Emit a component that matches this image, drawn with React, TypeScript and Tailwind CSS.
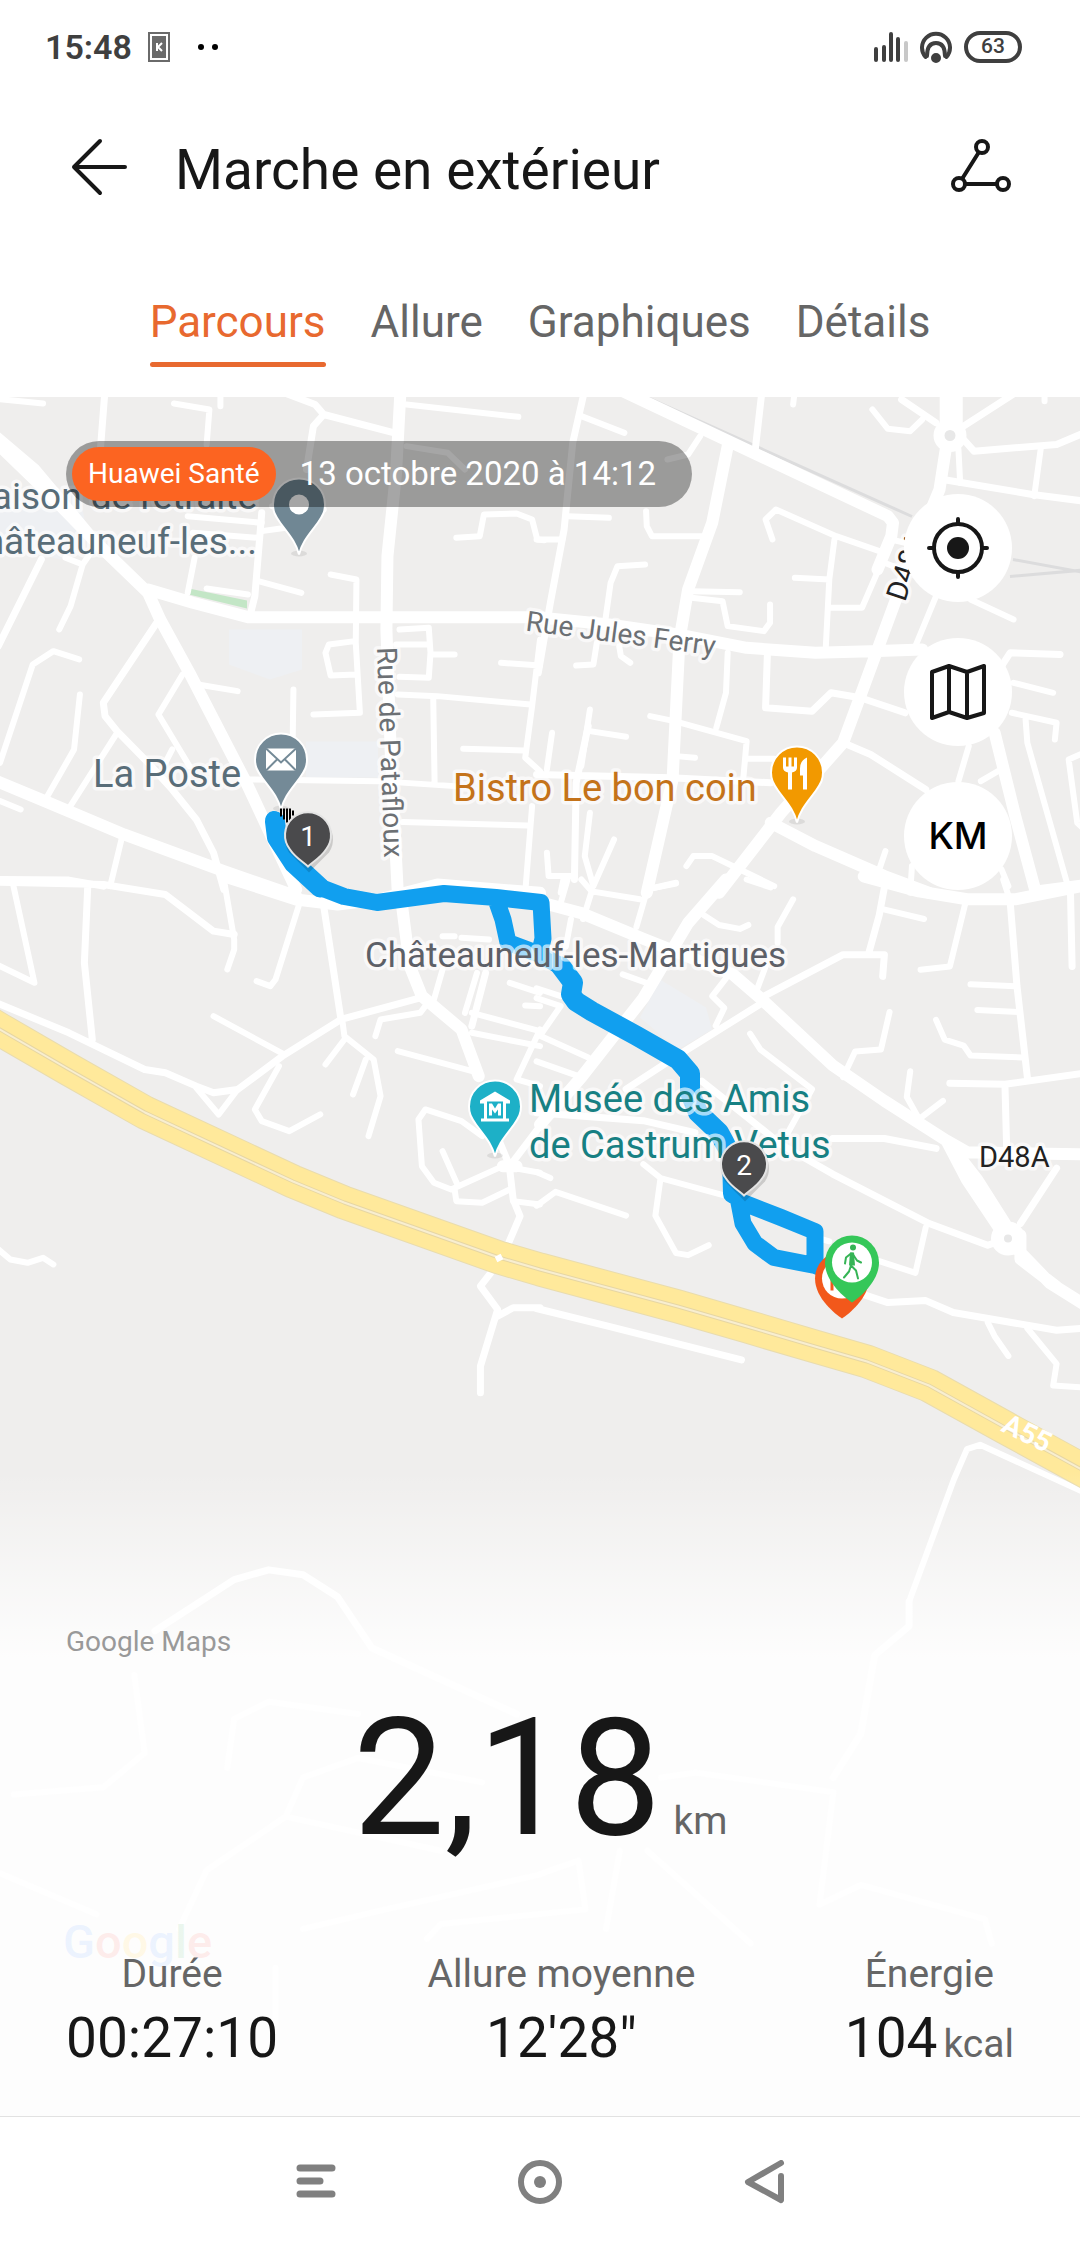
import React, { useState } from "react";

interface Tile {
  transform: string;
  minor: string;
  medium: string;
  major: string;
}

// The road network, one entry per map tile
const tiles: Tile[] = [
  {
    transform: "translate(0 390) scale(.3444 .3333)",
    minor:
      "M505 42L608 60L600 165M640 0V50M-10 28L125 42M1180 45L1505 82M1180 170L1300 190L1350 240M1325 445L1393 440L1405 375L1500 372L1545 390L1560 450L1580 452M190 505L240 525L205 650L172 720M240 525L270 480M565 505L545 610M545 380L760 400M560 430L750 445M760 425L830 415M750 575L875 610M600 597L720 615M790 350L940 360M960 555L1035 570L1033 760L1045 970L910 975M1030 755L955 765L945 790L960 858L1035 855M1150 765H1240M1160 720L1245 715L1250 790L1245 865L1160 862M1255 795H1320M1455 820L1568 828M1155 915L1270 920L1540 945M1258 930L1262 1185M1568 750L1545 950L1525 1105L1568 1145M1345 1078L1520 1083M720 1170L1100 1175L1320 1190M1170 1298L1530 1308M1545 1250L1525 1510M852 900L850 1040M575 885L690 905M530 855L460 975L550 1130M500 1080L480 1120M340 1030L195 1265M232 915L215 1080L135 1225M230 810L155 785L95 825L0 1120M0 1235L60 1260M355 1340L320 1490",
    medium:
      "M305 0L290 200M800 0L915 45L940 75L1145 130M940 75L910 110L890 240M120 510L-5 770M760 370L740 620L728 670M455 700L300 940L305 980L340 1025L430 1120L500 1200L570 1290L620 1390L650 1500M-10 1470L200 1472L300 1490",
    major:
      "M-20 150L130 300L290 470L430 610L465 690L550 850L720 1190L860 1500M-20 135L100 240L270 450M430 600L560 640L720 683H1575M1163 0L1150 250L1125 500L1122 720L1135 1100L1155 1510M-10 1175L130 1235L360 1335L650 1445L860 1520",
  },
  {
    transform: "translate(540 390) scale(.3444 .3333)",
    minor:
      "M120 80L245 130M740 0L735 45M965 60L1010 118L1075 125L1110 90M1465 0V35M1455 170L1435 320M1215 180L1220 280M465 140L430 195L370 210M80 380L200 385M-10 450L65 450M308 365L310 410L325 440L490 440M675 450L655 390L685 360L860 440L1000 490M1020 450L1060 460M855 450L840 570L830 770M740 565L840 570M840 655L935 655L1000 500M1000 520L1050 540M305 525L225 530L205 580L190 690M440 605L580 608M440 625L530 635L545 710L650 725L668 700V645M1150 620L1090 770M1250 630L1375 690M165 760L155 825L105 828M230 770L235 800L262 820M545 790L540 910L512 1015M320 980L390 995L600 1055L590 1170M600 1108H680M145 960L120 1130M145 1025L250 1042M395 1100L450 1105M35 1030L20 1140M145 1270L130 1400L155 1490M215 1350L155 1490M20 1390L25 1460H100M70 1460L60 1510M310 1500L395 1480M1245 1070L1215 1175M1280 1175L1330 1145M1375 880L1490 910M1410 990L1415 1060L1530 1480M1370 970L1500 1000L1495 1050M1568 1095L1535 1110L1560 1300L1580 1320M425 1430L445 1400L500 1400L600 1450L680 1490M1003 1385L985 1440M1340 1440L1360 1490M1080 1430L1075 1510",
    medium:
      "M130 0L95 160L70 420L30 640L-5 850M645 0L625 180M1050 30L1150 100M1230 110L1380 10M1230 150L1260 185L1500 165L1580 130M1170 270L1430 315L1580 335M660 800L655 955L790 965L845 910L930 925L1060 970M140 1010L105 1180L100 1470M-10 1155L380 1165L670 1180M880 1060L960 1095L1120 1200M1340 830L1365 790L1510 795M1430 1500L1580 1480",
    major:
      "M-10 683L200 705L400 735L600 775L800 790L960 785L1110 780M1195 0L1190 100L1160 300L1080 500L980 780L880 1060L700 1270L520 1510M230 0L1010 380L1025 400L1020 440L980 540M545 170L500 400L430 600L405 750L385 1170L310 1510M670 1300L800 1370L1000 1460L1130 1510M1320 1030L1380 1280L1440 1510M1178 20V120M1210 20V120",
  },
  {
    transform: "translate(0 880) scale(.3444 .3333)",
    minor:
      "M650 0L680 180V210L660 270M870 70L800 300L785 320L745 305M620 410L825 525M35 0L100 310L-10 255M570 625L635 705L690 630M810 560L740 690L760 725L840 755L930 705M995 430L1000 470L1085 540L1105 650L1070 770M1000 480L945 555M1062 540L1025 645M1235 380L1220 400L1105 420L1090 470M1285 270L1260 360M1385 280L1350 400M1285 170H1320M1340 175L1420 180M1155 515L1390 580M1370 400L1568 455M1370 460L1568 500M1480 310L1568 340M1525 378L1568 380M1568 450L1500 600L1568 620M1400 770L1340 725L1235 690L1215 720L1225 860L1260 910L1310 930L1460 860L1568 880M1285 815L1330 920M1320 930L1325 965L1400 970L1480 930M1490 965L1568 975M-10 1105L30 1140L80 1150L125 1135L155 1155",
    medium:
      "M-10 8L300 15L480 45L620 155L680 165M1220 355L990 420L820 530L690 630L620 640L570 620L480 580L420 570L200 460L-10 370M940 80L990 420M255 15L245 250L268 480M1410 280L1370 440M1480 870L1490 960L1510 1010L1475 1095M1440 760L1480 860L1568 740M1425 1180L1395 1220L1445 1290L1395 1460V1540M1445 1310L1490 1285H1568",
    major:
      "M650 -10L860 60L980 75L1100 60L1270 15L1568 40M1165 60L1190 260L1225 350L1340 450L1390 590M1460 860H1500",
  },
  {
    transform: "translate(540 880) scale(.3444 .3954)",
    minor:
      "M995 75L1115 100M1235 60L1190 220L1105 228M1345 0L1360 40M1250 265L1380 270M1270 330L1390 335M1150 355L1175 405L1230 420L1250 445L1400 450M1015 335L990 430L915 435L880 500M1075 485L1065 550L1110 620M1110 600L1170 560M610 390L640 430L790 530L720 640M735 50L690 120V160M655 220L625 290M540 250L500 295L535 325L510 370M475 90L520 115L580 125L605 115M240 240L320 265M600 0L670 20M60 60L80 0M125 100L150 30L120 0M150 30L290 50M320 0L280 120M310 25L395 10M90 100L75 170M-10 275L60 295M-10 300L60 320L0 395L140 450M-10 460L120 500M300 720L350 755L540 800M350 755L335 850L395 945L430 950L490 925M-10 825L45 790L250 850M-10 740L30 755M820 910L840 915M985 965L1090 995L1120 880M1300 1120L1320 1155L1360 1205M1415 1135L1500 1225L1490 1280L1580 1285",
    medium:
      "M1000 20L985 90L955 185M640 300L880 190L1000 190L995 245M1365 55L1385 270L1415 500M1540 20L1545 220M1190 515L1350 518L1580 490M1350 518L1355 680M850 655L1000 655L1150 680M640 315L400 445L250 530M-10 590L300 610L450 640M940 1050L1010 1070L1120 1065L1200 1095L1500 1140L1580 1135M1500 730L1395 870M-10 1085L200 1130L585 1215M470 510L600 600L700 670L850 745L1130 870L1300 925L1350 910",
    major:
      "M-10 55L120 85L300 150L560 240L640 300L850 470L1000 560L1180 660L1240 760L1340 890M1380 930L1480 1020L1580 1075M540 0L430 110L300 300L120 500L0 620M1180 660L1240 690L1580 695M940 -8L1100 30L1240 50L1380 50L1580 15M1190 670L1270 760L1350 870M1395 900V960L1500 1030",
  },
  {
    transform: "translate(0 1480) scale(.6887 .4885)",
    minor:
      "M195 400L210 560L150 630L20 645M330 590L340 490L390 455L520 480M415 690L440 610L520 570L700 620M960 610L1010 600L1210 640L1190 870L1250 830L1430 900L1440 950M-10 800L140 890M260 920L300 800L415 690L640 760M440 920L560 880L780 810L840 780L850 880L640 910L620 940M900 760L880 920M940 760L1090 950M400 1000V1120M1320 250L1385 0L1404 -62L1423 -71L1580 30",
    medium:
      "M1320 250V300L1270 360L1250 520L1210 610M225 310L340 205L390 185L440 195L490 240L540 345L750 480",
    major: "",
  },
];

const HIGHWAY =
  "M-20 1018L0 1030L69 1070L145 1113L293 1182L344 1203L499 1258L540 1270L678 1307L747 1327L815 1347L867 1362L929 1386L1005 1428L1100 1480";

const ROUTE =
  "M274 820L276 836L292 862L318 887L344 897L377 903L444 894L496 898L541 903L543 939L540 952M496 900L503 920L508 943L540 955L561 967M733 1157L734 1192L740 1202L781 1218L815 1232V1262M738 1198L743 1224L755 1244L774 1258L815 1266L832 1272";

// Stretches walked both ways come out wider
const ROUTE_BOTH_WAYS =
  "M275 822L277 838L294 864L320 888M561 967L573 983L571 995L576 1002L592 1012L636 1036L678 1060L690 1074V1093L698 1113L719 1133L732 1157L733 1194";

const PIN = "M0 50C-3 37-11 29-19 18C-24 11-26 7-26 0A26 26 0 0 1 26 0C26 7 24 11 19 18C11 29 3 37 0 50Z";
const FLAG_PIN = "M0 40C-6 36-27 20-27 0A27 27 0 1 1 27 0C27 20 6 36 0 40Z";

interface PlacePinProps {
  x: number;
  y: number;
  color: string;
  children: React.ReactNode;
}

const PlacePin: React.FC<PlacePinProps> = ({ x, y, color, children }) => (
  <g transform={`translate(${x} ${y})`}>
    <ellipse cx="0" cy="49" rx="8" ry="3" fill="#000" opacity="0.08" />
    <path d={PIN} fill={color} stroke="#fff" strokeWidth="2" />
    {children}
  </g>
);

const KilometrePin: React.FC<{ x: number; y: number; label: string }> = ({ x, y, label }) => (
  <g transform={`translate(${x} ${y})`}>
    <path d="M0 34L-20 14A24 24 0 1 1 20 14Z" fill="#000" opacity="0.15" transform="translate(1 3)" />
    <path d="M0 31C-4 27-13 22-18 14A23 23 0 1 1 18 14C13 22 4 27 0 31Z" fill="#4a4a4c" stroke="#e4e4e4" strokeWidth="2" />
    <text y="10" textAnchor="middle" fill="#fff" className="text-[28px]">
      {label}
    </text>
  </g>
);

const MapCanvas: React.FC = () => (
  <svg
    viewBox="0 397 1080 1720"
    preserveAspectRatio="xMidYMid slice"
    className="absolute inset-0 w-full h-full"
    aria-label="Carte du parcours"
  >
    <rect x="0" y="397" width="1080" height="1720" fill="#efeeed" />

    {/* Buildings and park */}
    <path
      d="M229 630H302V670L270 680L229 665ZM306 742H378V778H306ZM660 980L706 1008L712 1030L678 1050L640 1018ZM0 505L80 495L88 540L60 560L0 545Z"
      fill="#eef0f3"
    />
    <path d="M189 589L247 601V609L189 595Z" fill="#c3e6c6" />

    {/* Railway */}
    <path d="M645 397L912 517M1013 560L1090 574M1010 577L1090 570" stroke="#dcdcdd" strokeWidth="3" fill="none" />

    {/* Roads */}
    {tiles.map((tile) => (
      <g
        key={tile.transform}
        transform={tile.transform}
        fill="none"
        stroke="#fff"
        strokeLinecap="round"
        strokeLinejoin="round"
      >
        <path d={tile.minor} strokeWidth="6" vectorEffect="non-scaling-stroke" />
        <path d={tile.medium} strokeWidth="7" vectorEffect="non-scaling-stroke" />
        <path d={tile.major} strokeWidth="12" vectorEffect="non-scaling-stroke" />
      </g>
    ))}
    <circle cx="950" cy="436" r="11" fill="#e8e8e8" stroke="#fff" strokeWidth="11" />
    <circle cx="1008" cy="1239" r="10" fill="#fff" stroke="#fff" strokeWidth="14" />
    <circle cx="1008" cy="1239" r="4" fill="#e8e8e8" />

    {/* Highway */}
    <g fill="none" strokeLinejoin="round">
      <path d={HIGHWAY} stroke="#e9dcae" strokeWidth="34" />
      <path d={HIGHWAY} stroke="#ffe99b" strokeWidth="32" />
      <path d={HIGHWAY} stroke="#e6d6a4" strokeWidth="4" />
      <path d={HIGHWAY} stroke="#f8eed0" strokeWidth="2" />
      <path d="M496 1260L502 1257" stroke="#fff" strokeWidth="6" />
    </g>

    {/* Walked route */}
    <g fill="none" stroke="#119fef" strokeLinejoin="round" strokeLinecap="round">
      <path d={ROUTE} strokeWidth="17" />
      <path d={ROUTE_BOTH_WAYS} strokeWidth="20" />
    </g>

    {/* Labels */}
    <g
      className="text-[38px]"
      stroke="#fff"
      strokeOpacity="0.65"
      strokeWidth="7"
      strokeLinejoin="round"
      paintOrder="stroke"
    >
      <g fill="#596d78" className="text-[37px]">
        <text x="257" y="509" textAnchor="end">Maison de retraite</text>
        <text x="257" y="554" textAnchor="end">Châteauneuf-les...</text>
      </g>
      <text x="93" y="787" fill="#596d78">La Poste</text>
      <text x="453" y="801" fill="#c4731a">Bistro Le bon coin</text>
      <text x="365" y="967" fill="#5d6067" className="text-[35px]">Châteauneuf-les-Martigues</text>
      <g fill="#178083">
        <text x="529" y="1112">Musée des Amis</text>
        <text x="529" y="1158">de Castrum Vetus</text>
      </g>
      <g className="text-[28px]">
        <text transform="translate(525 631) rotate(7.5)" fill="#6c7074">Rue Jules Ferry</text>
        <text transform="translate(377 648) rotate(88)" fill="#6c7074">Rue de Patafloux</text>
      </g>
      <g className="text-[29px]" fill="#222">
        <text x="979" y="1167">D48A</text>
        <text transform="translate(905 603) rotate(-72)">D48A</text>
      </g>
    </g>
    <text transform="translate(1000 1431) rotate(26)" fill="#fff" className="text-[28px] font-bold">A55</text>

    <PlacePin x={299} y={505} color="#708794">
      <circle r="10" fill="#fff" />
    </PlacePin>
    <PlacePin x={281} y={760} color="#748a97">
      <rect x="-15" y="-11" width="30" height="22" fill="#fff" />
      <path d="M-15-11L0 3L15-11M-15 11L-4 0M15 11L4 0" fill="none" stroke="#748a97" strokeWidth="2" />
    </PlacePin>
    <PlacePin x={797} y={773} color="#f29900">
      <path
        d="M-14-15V-5Q-14-1-9 0V17H-5V0Q0-1 0-5V-15H-3V-6H-5.500V-15H-8.500V-6H-11V-15ZM10-15Q3-12 3-4V3H6V17H10Z"
        fill="#fff"
      />
    </PlacePin>
    <PlacePin x={495} y={1107} color="#1db0c7">
      <path
        d="M0-15L-15-6V-3H-11V12H-14V15H14V12H11V-3H15V-6ZM-8-5H8V12H-8ZM-6 9V-3H-3L0 2L3-3H6V9H3V3L0 7L-3 3V9Z"
        fill="#fff"
        fillRule="evenodd"
      />
    </PlacePin>

    <path d="M281 809V817M284 809V820M287 809V823M290 809V822M293 811V816" stroke="#000" strokeWidth="2" />
    <KilometrePin x={308} y={836} label="1" />
    <KilometrePin x={744} y={1165} label="2" />

    {/* Finish, then start on top of it */}
    <g transform="translate(842 1279)">
      <path d={FLAG_PIN} fill="#f2581b" />
      <circle r="20" fill="#fff" />
      <path d="M-10-8V12" stroke="#f2581b" strokeWidth="3" />
    </g>
    <g transform="translate(852 1263)">
      <path d={FLAG_PIN} fill="#35c759" />
      <circle r="20" fill="#fff" />
      <circle cx="1" cy="-15" r="3" fill="#35b455" />
      <path
        d="M0-9L-1 3L4 8L6 16M-1 3L-3 9L-8 15M-1-9L-6-5L-7 1M1-8L5-2L9 0"
        fill="none"
        stroke="#35b455"
        strokeWidth="2"
        strokeLinecap="round"
        strokeLinejoin="round"
      />
      <path d="M-2-10H2L3 3H-3Z" fill="#35b455" />
    </g>

    <text x="63" y="1958" className="text-[47px] font-medium">
      <tspan fill="#4285f4">G</tspan>
      <tspan fill="#ea4335">o</tspan>
      <tspan fill="#fbbc05">o</tspan>
      <tspan fill="#4285f4">g</tspan>
      <tspan fill="#34a853">l</tspan>
      <tspan fill="#ea4335">e</tspan>
    </text>
  </svg>
);

const StatusBar: React.FC = () => (
  <div className="flex items-center h-[93px] pl-[45px] pr-[58px] text-[#3f3f3f]">
    <span className="text-[34px] leading-[48px] font-semibold">15:48</span>
    <svg viewBox="0 0 22 30" className="w-[22px] h-[30px] ml-4">
      <rect x="1" y="1" width="20" height="28" fill="#fff" stroke="#6a6a6a" strokeWidth="2" />
      <rect x="4" y="4" width="14" height="22" fill="#6a6a6a" />
      <path d="M9 11V19M14 11L10 15L14 19" stroke="#fff" strokeWidth="2" fill="none" />
    </svg>
    <svg viewBox="0 0 22 8" className="w-[22px] h-2 ml-[27px]">
      <circle cx="4" cy="4" r="3" fill="#000" />
      <circle cx="18" cy="4" r="3" fill="#000" />
    </svg>
    <div className="flex items-center gap-3 ml-auto">
      <svg viewBox="0 0 34 32" className="w-[34px] h-8" strokeWidth="4" strokeLinecap="round">
        <path d="M2 18V29M10 16V29M17 3V29M24 8V29" stroke="#3f3f3f" />
        <path d="M32 12V29" stroke="#c8c8c8" />
      </svg>
      <svg viewBox="0 0 32 32" className="w-8 h-8" fill="none" stroke="#3f3f3f" strokeWidth="4" strokeLinecap="round">
        <path d="M5.500 26A14 14 0 1 1 26.500 26" />
        <path d="M7 25Q7 12 16 12Q25 12 25 25" />
        <circle cx="16" cy="27" r="3" fill="#3f3f3f" />
      </svg>
      <span className="flex items-center justify-center w-[58px] h-8 border-4 border-[#3f3f3f] rounded-full text-[21px] font-medium">
        63
      </span>
    </div>
  </div>
);

interface StatProps {
  label: string;
  value: string;
  unit?: string;
}

const Stat: React.FC<StatProps> = ({ label, value, unit }) => (
  <div className="flex flex-col items-center gap-2">
    <dt className="text-[39px] leading-[48px] text-[#666]">{label}</dt>
    <dd className="text-[55px] leading-[64px]">
      {value}
      {unit && <span className="ml-1.5 text-[39px] text-[#666]">{unit}</span>}
    </dd>
  </div>
);

const tabs = ["Parcours", "Allure", "Graphiques", "Détails"];

const App: React.FC = () => {
  const [activeTab, setActiveTab] = useState<string>("Parcours");

  return (
    <div className="flex flex-col min-h-screen bg-white text-[#171717] font-['Roboto',sans-serif]">
      <StatusBar />

      <header className="flex items-center h-[147px] px-[69px]">
        <button type="button" aria-label="Retour">
          <svg viewBox="0 0 60 60" className="w-[60px] h-[60px]" fill="none" stroke="#171717" strokeWidth="4" strokeLinecap="round" strokeLinejoin="round">
            <path d="M31 4L5 30L31 56M5 30H56" />
          </svg>
        </button>
        <h1 className="ml-[46px] pt-1.5 text-[55px] leading-[64px]">Marche en extérieur</h1>
        <button type="button" aria-label="Partager" className="ml-auto">
          <svg viewBox="0 0 60 60" className="w-[60px] h-[60px]" fill="none" stroke="#171717" strokeWidth="4">
            <circle cx="31" cy="10" r="6" />
            <circle cx="8" cy="47" r="6" />
            <circle cx="52" cy="47" r="6" />
            <path d="M28 15L11 42M14 47H46" />
          </svg>
        </button>
      </header>

      <nav className="flex justify-center gap-[45px] pt-[54px] pb-[30px]">
        {tabs.map((tab) => (
          <button key={tab} type="button" onClick={() => setActiveTab(tab)} className="flex flex-col gap-3">
            <span
              className={
                activeTab === tab
                  ? "text-[44px] leading-[56px] text-[#e8692f]"
                  : "text-[44px] leading-[56px] text-[#666]"
              }
            >
              {tab}
            </span>
            <span
              className={
                activeTab === tab ? "w-full h-[5px] rounded-full bg-[#e8692f]" : "w-full h-[5px]"
              }
            />
          </button>
        ))}
      </nav>

      <main className="relative flex flex-col flex-1 overflow-hidden">
        <MapCanvas />

        {/* Session badge and map controls */}
        <div className="relative flex items-start justify-between pt-11 pl-[66px] pr-[68px]">
          <div className="flex items-center h-[66px] p-1.5 pr-9 rounded-full bg-black/35 text-white">
            <span className="flex items-center h-[54px] px-4 rounded-full bg-[#fc6421] text-[28px]">
              Huawei Santé
            </span>
            <span className="ml-6 text-[33px]">13 octobre 2020 à 14:12</span>
          </div>
          <div className="flex flex-col gap-9 pt-[53px]">
            <button type="button" aria-label="Ma position" className="flex items-center justify-center w-[108px] h-[108px] rounded-full bg-white">
              <svg viewBox="0 0 64 64" className="w-16 h-16" fill="none" stroke="#171717" strokeWidth="4" strokeLinecap="round">
                <circle cx="32" cy="32" r="24" />
                <circle cx="32" cy="32" r="11" fill="#171717" stroke="none" />
                <path d="M32 3V8M32 56V61M3 32H8M56 32H61" />
              </svg>
            </button>
            <button type="button" aria-label="Type de carte" className="flex items-center justify-center w-[108px] h-[108px] rounded-full bg-white">
              <svg viewBox="0 0 64 64" className="w-16 h-16" fill="none" stroke="#171717" strokeWidth="4" strokeLinejoin="round">
                <path d="M6 12L23 6L41 12L58 6V53L41 58L23 52L6 58ZM23 6V52M41 12V58" />
              </svg>
            </button>
            <button type="button" className="w-[108px] h-[108px] rounded-full bg-white text-black text-[37px] font-medium font-['Inter',sans-serif]">
              KM
            </button>
          </div>
        </div>

        {/* Summary */}
        <section className="relative mt-auto px-[66px] pt-[154px] pb-10 bg-linear-to-b from-white/0 to-white/90 to-[190px]">
          <p className="text-[28px] leading-[34px] text-[#999]">Google Maps</p>
          <p className="flex items-baseline justify-center gap-3 mt-9 text-[164px] leading-[166px]">
            2,18
            <span className="text-[39px] leading-none text-[#666]">km</span>
          </p>
          <dl className="flex justify-between mt-[89px]">
            <Stat label="Durée" value="00:27:10" />
            <Stat label="Allure moyenne" value={"12'28\""} />
            <Stat label="Énergie" value="104" unit="kcal" />
          </dl>
        </section>
      </main>

      <footer className="flex items-center justify-center gap-[180px] h-[130px] border-t border-[#e2e2e2]">
        <button type="button" aria-label="Applications récentes">
          <svg viewBox="0 0 44 44" className="w-11 h-11" stroke="#808080" strokeWidth="7" strokeLinecap="round">
            <path d="M6 8H38M6 21H26M6 34H38" />
          </svg>
        </button>
        <button type="button" aria-label="Accueil">
          <svg viewBox="0 0 44 44" className="w-11 h-11">
            <circle cx="22" cy="22" r="19" fill="none" stroke="#808080" strokeWidth="6" />
            <circle cx="22" cy="22" r="6" fill="#808080" />
          </svg>
        </button>
        <button type="button" aria-label="Précédent">
          <svg viewBox="0 0 44 44" className="w-11 h-11" fill="none" stroke="#808080" strokeWidth="6" strokeLinecap="round" strokeLinejoin="round">
            <path d="M39 3L6 22L39 40V16" />
          </svg>
        </button>
      </footer>
    </div>
  );
};

export default App;
